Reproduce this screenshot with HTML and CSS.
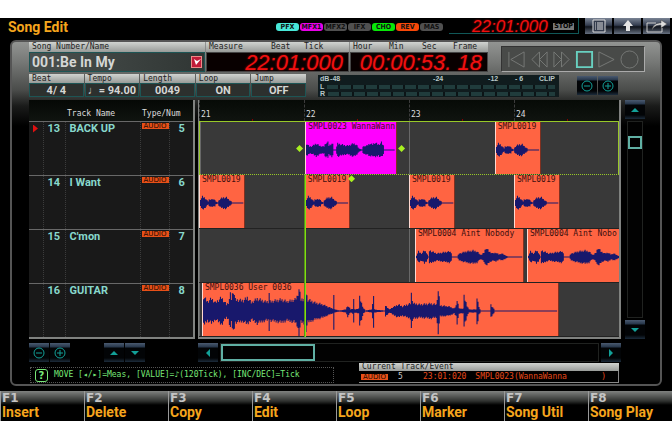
FILE: index.html
```html
<!DOCTYPE html>
<html lang="en">
<head>
    <meta charset="UTF-8">
    <meta name="viewport" content="width=device-width, initial-scale=1.0">
    <title>Song Edit</title>
    <link rel="stylesheet" href="styles.css">
</head>
<body>

    <div class="screen">
        <header class="titlebar">
            <h1>Song Edit</h1>
            <div class="effects">
                <span class="badge cyan">PFX</span>
                <span class="badge magenta">MFX1</span>
                <span class="badge">MFX2</span>
                <span class="badge">IFX</span>
                <span class="badge green">CHO</span>
                <span class="badge orange">REV</span>
                <span class="badge">MAS</span>
            </div>
            <div class="position">
                <span class="led small">22:01:000</span>
                <span class="stop-label">STOP</span>
            </div>
            <div class="top-buttons">
                <button aria-label="Menu">
                    <svg width="18" height="14" viewBox="0 0 18 14"><path d="M3 1h12v12H3z" fill="#333b4c" stroke="#ddd"/><path d="M5 4h1M7 4h6M5 6h1M7 6h6M5 8h1M7 8h6M5 10h1M7 10h6" stroke="#ddd"/></svg>
                </button>
                <button aria-label="Up">
                    <svg width="18" height="14" viewBox="0 0 18 14"><path d="M9 1l5 6h-3v5H7V7H4z" fill="#e4e4e4"/></svg>
                </button>
                <button aria-label="Exit">
                    <svg width="24" height="14" viewBox="0 0 24 14"><path d="M11 4H2v9h15V9" fill="none" stroke="#ccc"/><path d="M7 11c1-5 4-7 9-7V1l6 4-6 4V6c-4 0-7 1-9 5z" fill="#ddd" stroke="#444" stroke-width=".5"/></svg>
                </button>
            </div>
        </header>

        <main class="panel">
            <div class="row">
                <div class="field song">
                    <div class="label">Song Number/Name</div>
                    <div class="value">
                        <span>001:Be In My</span>
                        <button class="list-button" aria-label="Song list">
                            <svg width="8" height="8" viewBox="0 0 8 8"><path d="M1 1l2 6 5-6-4 2z" fill="#fff"/></svg>
                        </button>
                    </div>
                </div>
                <div class="field measure">
                    <div class="label"><span>Measure</span><span>Beat</span><span>Tick</span></div>
                    <div class="value led">22:01:000</div>
                </div>
                <div class="field hour">
                    <div class="label"><span>Hour</span><span>Min</span><span>Sec</span><span>Frame</span></div>
                    <div class="value led">00:00:53. 18</div>
                </div>
                <div class="transport">
                    <button aria-label="To start"><svg viewBox="0 0 20 20"><path d="M2 2v16M18 2v16L4 10z"/></svg></button>
                    <button aria-label="Rewind"><svg viewBox="0 0 20 20"><path d="M10 2v16L2 10zM18 2v16l-8-8z"/></svg></button>
                    <button aria-label="Forward"><svg viewBox="0 0 20 20"><path d="M2 2v16l8-8zM10 2v16l8-8z"/></svg></button>
                    <button class="active" aria-label="Stop"><svg viewBox="0 0 20 20"><path d="M2 2h16v16H2z"/></svg></button>
                    <button aria-label="Play"><svg viewBox="0 0 20 20"><path d="M2 2v16l16-8z"/></svg></button>
                    <button aria-label="Record"><svg viewBox="0 0 20 20"><circle cx="10" cy="10" r="9"/></svg></button>
                </div>
            </div>

            <div class="row second">
                <div class="field small-field">
                    <div class="label">Beat</div>
                    <div class="value">4/ 4</div>
                </div>
                <div class="field small-field">
                    <div class="label">Tempo</div>
                    <div class="value">♩= 94.00</div>
                </div>
                <div class="field small-field">
                    <div class="label">Length</div>
                    <div class="value">0049</div>
                </div>
                <div class="field small-field">
                    <div class="label">Loop</div>
                    <div class="value">ON</div>
                </div>
                <div class="field small-field">
                    <div class="label">Jump</div>
                    <div class="value">OFF</div>
                </div>
                <div class="meter">
                    <div class="scale">
                        <span>dB</span><span>-48</span><span>-24</span><span>-12</span><span>- 6</span><span>CLIP</span>
                    </div>
                    <div class="channel"><span>L</span><i></i></div>
                    <div class="channel"><span>R</span><i></i></div>
                </div>
                <div class="zoom">
                    <button class="key" aria-label="Zoom out"><svg width="12" height="12" viewBox="0 0 12 12"><circle cx="6" cy="6" r="5"/><path d="M3 6h6"/></svg></button>
                    <button class="key" aria-label="Zoom in"><svg width="12" height="12" viewBox="0 0 12 12"><circle cx="6" cy="6" r="5"/><path d="M3 6h6M6 3v6"/></svg></button>
                </div>
            </div>

            <div class="editor">
                <table class="tracks">
                    <colgroup>
                        <col class="mark"><col class="num"><col class="name"><col class="type"><col class="ch">
                    </colgroup>
                    <thead>
                        <tr><th></th><th></th><th>Track Name</th><th colspan="2">Type/Num</th></tr>
                    </thead>
                    <tbody>
                        <tr><td><span class="current"></span></td><td>13</td><td>BACK UP</td><td><span class="audio">AUDIO</span></td><td>5</td></tr>
                        <tr><td></td><td>14</td><td>I Want</td><td><span class="audio">AUDIO</span></td><td>6</td></tr>
                        <tr><td></td><td>15</td><td>C'mon</td><td><span class="audio">AUDIO</span></td><td>7</td></tr>
                        <tr><td></td><td>16</td><td>GUITAR</td><td><span class="audio">AUDIO</span></td><td>8</td></tr>
                    </tbody>
                </table>

                <div class="timeline">
                    <div class="ruler"><span>21</span><span>22</span><span>23</span><span>24</span></div>
                    <div class="lanes">
                        <div class="lane selected">
                            <div class="clip picked" style="left:25.2%;width:21.9%"><span>SMPL0023 WannaWann</span><svg data-wave="wanna"></svg></div>
                            <div class="clip" style="left:70.5%;width:11%"><span>SMPL0019</span><svg data-wave="stab"></svg></div>
                            <b class="handle" style="left:23.7%;top:50%"></b>
                            <b class="handle" style="left:48.1%;top:50%"></b>
                        </div>
                        <div class="lane">
                            <div class="clip" style="left:0%;width:11%"><span>SMPL0019</span><svg data-wave="stab"></svg></div>
                            <div class="clip" style="left:25.2%;width:10.7%"><span>SMPL0019</span><svg data-wave="stab"></svg></div>
                            <div class="clip" style="left:50%;width:11%"><span>SMPL0019</span><svg data-wave="stab"></svg></div>
                            <div class="clip" style="left:75%;width:11%"><span>SMPL0019</span><svg data-wave="stab"></svg></div>
                            <b class="handle" style="left:36.2%;top:6%"></b>
                        </div>
                        <div class="lane">
                            <div class="clip" style="left:51.4%;width:26%"><span>SMPL0004 Aint Nobody</span><svg data-wave="nobody"></svg></div>
                            <div class="clip" style="left:78.1%;width:26%"><span>SMPL0004 Aint Nobo</span><svg data-wave="nobody"></svg></div>
                        </div>
                        <div class="lane">
                            <div class="clip" style="left:0.7%;width:85%"><span>SMPL0036 User 0036</span><svg data-wave="user"></svg></div>
                        </div>
                        <div class="playhead" style="left:25.2%"></div>
                    </div>
                </div>

                <div class="vscroll">
                    <button class="key" aria-label="Scroll up"><svg width="8" height="4" viewBox="0 0 8 4"><path class="solid" d="M0 4l4-4 4 4z"/></svg></button>
                    <div class="track"><div class="thumb"></div></div>
                    <button class="key" aria-label="Scroll down"><svg width="8" height="4" viewBox="0 0 8 4"><path class="solid" d="M0 0l4 4 4-4z"/></svg></button>
                </div>

                <div class="track-keys">
                    <button class="key" aria-label="Shrink"><svg width="12" height="12" viewBox="0 0 12 12"><circle cx="6" cy="6" r="5"/><path d="M3 6h6"/></svg></button>
                    <button class="key" aria-label="Enlarge"><svg width="12" height="12" viewBox="0 0 12 12"><circle cx="6" cy="6" r="5"/><path d="M3 6h6M6 3v6"/></svg></button>
                    <button class="key apart" aria-label="Previous track"><svg width="8" height="4" viewBox="0 0 8 4"><path class="solid" d="M0 4l4-4 4 4z"/></svg></button>
                    <button class="key" aria-label="Next track"><svg width="8" height="4" viewBox="0 0 8 4"><path class="solid" d="M0 0l4 4 4-4z"/></svg></button>
                </div>

                <div class="hscroll">
                    <button class="key" aria-label="Scroll left"><svg width="4" height="8" viewBox="0 0 4 8"><path class="solid" d="M4 0L0 4l4 4z"/></svg></button>
                    <div class="track"><div class="thumb"></div></div>
                    <button class="key" aria-label="Scroll right"><svg width="4" height="8" viewBox="0 0 4 8"><path class="solid" d="M0 0l4 4-4 4z"/></svg></button>
                </div>
            </div>

            <div class="status">
                <div class="help">
                    <span class="question">?</span>
                    <span>MOVE [◂/▸]=Meas, [VALUE]=♪(120Tick), [INC/DEC]=Tick</span>
                </div>
                <div class="event">
                    <div class="label">Current Track/Event</div>
                    <div class="event-info">
                        <span class="audio">AUDIO</span>
                        <span class="white">5</span>
                        <span>23:01:020</span>
                        <span class="sample"><span>SMPL0023(WannaWanna</span><span>)</span></span>
                    </div>
                </div>
            </div>
        </main>

        <nav class="fkeys">
            <button><small>F1</small>Insert</button>
            <button><small>F2</small>Delete</button>
            <button><small>F3</small>Copy</button>
            <button><small>F4</small>Edit</button>
            <button><small>F5</small>Loop</button>
            <button><small>F6</small>Marker</button>
            <button><small>F7</small>Song Util</button>
            <button><small>F8</small>Song Play</button>
        </nav>
    </div>

    <script src="waves.js"></script>
</body>
</html>
```

FILE: styles.css
```css
* {
    box-sizing: border-box;
}
body {
    margin: 0;
    padding-top: 18px;
    background: #fff;
    font-family: "DejaVu Sans Mono", monospace;
    font-size: 8px;
    line-height: 10px;
}
button {
    margin: 0;
    padding: 0;
    border: none;
    font: inherit;
    cursor: pointer;
}
svg {
    display: block;
}
.screen {
    background: #000;
}

/* title bar */
.titlebar {
    display: flex;
    align-items: flex-start;
    height: 22px;
    padding-right: 2px;
}
h1 {
    margin: 0 auto 0 8px;
    color: #f5a51d;
    font: bold 14px/18px Roboto, sans-serif;
}
.effects {
    display: flex;
    gap: 1px;
    padding-top: 5px;
}
.badge {
    width: 23px;
    height: 8px;
    border-radius: 3px;
    background: #505050;
    color: #111;
    font: bold 7px/8px "DejaVu Sans Condensed", "DejaVu Sans", sans-serif;
    text-align: center;
}
.cyan { background: #48e8d8; }
.magenta { background: #e800e8; }
.green { background: #08e808; }
.orange { background: #f84808; }
.led {
    color: #f01010;
    font: italic 22px/20px "Liberation Sans", sans-serif;
    text-shadow: 0 0 2px #a00000;
    white-space: pre;
}
.led.small {
    font-size: 17px;
    line-height: 14px;
}
.position {
    display: flex;
    align-items: center;
    justify-content: space-between;
    width: 130px;
    height: 16px;
    margin-left: 6px;
    padding: 2px 4px 0 23px;
    border-bottom: 1px solid #105858;
    border-right: 1px solid #105858;
}
.stop-label {
    padding: 0 1px;
    background: #777;
    color: #000;
    font: bold 7px/7px "DejaVu Sans Condensed", "DejaVu Sans", sans-serif;
}
.top-buttons {
    display: flex;
    gap: 2px;
    margin-left: 6px;
}
.top-buttons button {
    display: flex;
    align-items: center;
    justify-content: center;
    width: 27px;
    height: 16px;
    background: linear-gradient(#7a8494, #343d50 45%, #10141c 55%, #667080);
}

/* panel */
.panel {
    margin: 0 10px;
    padding: 0 15px 1px 17px;
    border: 2px solid #555;
    border-radius: 6px;
    background: linear-gradient(#929492, #767876 20px, #4a4c4a 48px, #1a1b1a 64px, #000 84px);
}
.row {
    display: flex;
    gap: 1px;
}
.second {
    margin: 2px 0 3px;
}
.label {
    height: 10px;
    padding-left: 3px;
    background: linear-gradient(#d0d3d0, #989b98);
    color: #222;
    white-space: nowrap;
}
.value {
    height: 20px;
    border: 1px solid #1d5555;
    background: #2c302e;
    color: #d4d6d4;
    font: bold 11px/13px Roboto, sans-serif;
    white-space: nowrap;
}
.song {
    flex: 1;
}
.song .value {
    display: flex;
    align-items: center;
    justify-content: space-between;
    padding: 0 2px;
    background: linear-gradient(90deg, #4a504e, #303634);
    font-size: 14px;
}
.list-button {
    display: flex;
    align-items: center;
    justify-content: center;
    width: 11px;
    height: 12px;
    border: 1px solid #e88;
    background: #c01c38;
}
.measure {
    width: 143px;
}
.hour {
    width: 138px;
}
.measure .label,
.hour .label {
    display: grid;
    grid-template-columns: 36px 33px 31px 1fr;
}
.measure .label {
    grid-template-columns: 62px 33px 1fr;
}
.field .led {
    padding-right: 5px;
    border-color: #444;
    background: #080000;
    color: #f01010;
    font: italic 22px/20px "Liberation Sans", sans-serif;
    text-align: right;
}
.transport {
    display: flex;
    align-items: center;
    justify-content: space-between;
    width: 144px;
    height: 26px;
    margin: 4px 0 0 12px;
    padding: 0 5px;
    border: 1px solid #aaa;
    border-top-color: #333;
    border-left-color: #333;
    background: #484a48;
}
.transport button {
    background: none;
}
.transport svg {
    width: 19px;
    height: 19px;
    fill: none;
    stroke: #777977;
}
.transport .active svg {
    stroke: #68d0c0;
    stroke-width: 2;
}
.small-field {
    width: 55px;
}
.small-field .label {
    height: 9px;
    line-height: 9px;
}
.small-field .value {
    height: 14px;
    line-height: 13px;
    text-align: center;
}
.meter {
    flex: 1;
    height: 22px;
    margin: 1px 0 0 11px;
    padding: 0 4px 0 2px;
    background: #101c1e;
    color: #b8c8c8;
    font: bold 7px/7px "Liberation Sans", sans-serif;
}
.scale {
    display: grid;
    grid-template-columns: 10px 103px 55px 27px 24px 1fr;
    height: 8px;
    white-space: nowrap;
}
.channel {
    display: flex;
    gap: 3px;
}
.channel i {
    flex: 1;
    height: 4px;
    margin-top: 2px;
    background: repeating-linear-gradient(90deg, #203c3c 0 11px, #0c1416 11px 13px);
}
.zoom {
    display: flex;
    gap: 1px;
    margin: 2px 27px 0 17px;
}
.key {
    display: flex;
    flex: none;
    align-items: center;
    justify-content: center;
    width: 20px;
    height: 19px;
    background: linear-gradient(#4a5a70, #26364a 4px, #020406 5px, #020406 15px, #1c2c3c);
}
.key svg {
    fill: none;
    stroke: #12a098;
}
.key .solid {
    fill: #12a098;
    stroke: none;
}

/* track list and timeline */
.editor {
    display: grid;
    grid-template-columns: 165px minmax(0, 1fr) 20px;
    gap: 4px;
}
.tracks {
    width: 100%;
    height: 239px;
    border-collapse: collapse;
    table-layout: fixed;
    border-right: 2px solid #808280;
    border-bottom: 2px solid #808280;
    background: #191919;
}
.mark { width: 14px; }
.num { width: 22px; }
.name { width: 75px; }
.type { width: 29px; }
.ch { width: 25px; }
.tracks th {
    height: 21px;
    padding: 8px 0 0 2px;
    background: linear-gradient(#050805, #101410);
    color: #ddd;
    font-weight: normal;
    text-align: left;
}
.tracks td {
    height: 54px;
    padding: 0 0 0 4px;
    border-top: 1px solid #686868;
    border-right: 1px dotted #3c3c3c;
    color: #88d8cc;
    font: bold 11px/14px Roboto, sans-serif;
    vertical-align: top;
}
.tracks td:nth-child(4) {
    padding-left: 1px;
}
.tracks td:last-child {
    padding-left: 9px;
}
.current {
    display: block;
    width: 5px;
    height: 8px;
    margin-top: 3px;
    background: #e01010;
    clip-path: polygon(0 0, 100% 50%, 0 100%);
}
.audio {
    display: block;
    width: 27px;
    height: 6px;
    background: #e85018;
    color: #200800;
    font: 7px/6px "DejaVu Sans", sans-serif;
    text-align: center;
}
.tracks .audio {
    margin-top: 1px;
}
.timeline {
    border: solid #808280;
    border-width: 0 2px 2px 1px;
    background: #000;
}
.ruler {
    display: grid;
    grid-template-columns: repeat(4, 1fr);
    height: 21px;
    background: linear-gradient(#060a06, #101410);
    color: #ddd;
}
.ruler span {
    padding: 10px 0 0 1px;
    border-left: 1px dashed #3c3c3c;
    background: linear-gradient(#800, #800) 50% 100% / 1px 2px no-repeat;
}
.lanes {
    position: relative;
}
.lane {
    position: relative;
    height: 54px;
    overflow: hidden;
    border-bottom: 1px solid #222;
    background: repeating-linear-gradient(90deg, #686868 0 1px, #393939 1px 25%);
}
.selected {
    border: 1px solid #98c828;
    border-bottom-style: dotted;
}
.clip {
    position: absolute;
    top: 0;
    bottom: 0;
    overflow: hidden;
    border-left: 1px solid #ffd8d0;
    border-right: 1px solid #803020;
    background: #ff6442;
    color: #401010;
    white-space: nowrap;
}
.clip span {
    display: block;
    padding-left: 2px;
}
.clip svg {
    width: 100%;
    height: 36px;
    overflow: visible;
    fill: #18186c;
}
.picked {
    background: #ff00ff;
}
.handle {
    position: absolute;
    width: 7px;
    height: 7px;
    margin: -3px;
    background: #a8f020;
    clip-path: polygon(50% 0, 100% 50%, 50% 100%, 0 50%);
}
.playhead {
    position: absolute;
    top: 54px;
    bottom: 0;
    width: 1px;
    background: #80e010;
    box-shadow: -1px 0 #58901c;
}
.vscroll,
.hscroll {
    display: flex;
    gap: 2px;
}
.vscroll {
    flex-direction: column;
}
.track {
    flex: 1;
    border: 1px solid #202220;
    background: #020202;
}
.vscroll .track {
    margin: 0 2px;
    padding-top: 14px;
}
.thumb {
    border: 2px solid #60b0a4;
}
.vscroll .thumb {
    height: 13px;
}
.hscroll .thumb {
    width: 25%;
    height: 100%;
}
.track-keys {
    display: flex;
    gap: 1px;
}
.track-keys .apart {
    margin-left: 33px;
}

/* help line and current event */
.status {
    display: flex;
    align-items: flex-end;
    justify-content: space-between;
    margin: 1px 26px 0 1px;
}
.help {
    display: flex;
    align-items: center;
    gap: 6px;
    width: 304px;
    height: 16px;
    padding-left: 4px;
    border: 1px dotted #555;
    color: #78e878;
    white-space: nowrap;
}
.question {
    width: 13px;
    height: 13px;
    border: 1px solid #78e878;
    border-radius: 3px;
    font: bold 10px/11px "DejaVu Sans", sans-serif;
    text-align: center;
}
.event {
    width: 260px;
}
.event .label {
    height: 8px;
    line-height: 8px;
}
.event-info {
    display: flex;
    align-items: center;
    height: 12px;
    padding-left: 2px;
    border: solid #888;
    border-width: 0 1px 1px 0;
    background: #000;
    color: #e84818;
}
.event-info .white {
    width: 35px;
    padding-left: 10px;
    color: #ccc;
}
.sample {
    display: flex;
    flex: 1;
    justify-content: space-between;
    padding: 0 12px 0 9px;
}

/* function keys */
.fkeys {
    display: grid;
    grid-template-columns: repeat(8, 1fr);
    padding-top: 5px;
}
.fkeys button {
    height: 30px;
    padding-left: 1px;
    border-left: 1px solid #999;
    background: linear-gradient(#808280, #303230 10px, #000 14px);
    color: #f5a51d;
    font: bold 14px/17px Roboto, sans-serif;
    text-align: left;
}
.fkeys small {
    display: block;
    color: #c4c4c4;
    font: bold 12px/12px "DejaVu Sans", sans-serif;
}
```

FILE: waves.js
```js
// Envelope of each sample: length, then [x, amplitude] points
const waves = {
    stab: { length: 46, points: [[0, 3], [2, 6], [4, 5], [6, 3], [8, 1], [9, 3], [15, 3], [16, 1], [18, 0], [19, 2], [21, 4], [24, 5], [27, 5], [32, 1], [33, 0], [46, 0]] },
    wanna: { length: 92, points: [[0, 6], [3, 3], [5, 3], [10, 6], [13, 4], [16, 3], [18, 3], [20, 7], [22, 7], [23, 4], [26, 6], [27, 5], [28, 0], [30, 0], [32, 6], [36, 5], [40, 4], [43, 4], [48, 6], [51, 5], [54, 1], [57, 0], [58, 3], [62, 4], [65, 6], [68, 5], [70, 7], [74, 5], [77, 7], [79, 4], [80, 0], [92, 0]] },
    nobody: { length: 108, points: [[0, 1], [2, 5], [5, 3], [8, 6], [10, 4], [12, 0], [13, 6], [16, 5], [20, 3], [26, 4], [33, 5], [35, 4], [36, 0], [41, 0], [43, 3], [50, 5], [57, 6], [61, 5], [64, 2], [66, 2], [68, 4], [70, 9], [73, 5], [77, 3], [80, 4], [83, 2], [86, 3], [92, 0], [108, 0]] },
    user: { length: 357, points: [[0, 14], [4, 9], [8, 12], [12, 8], [18, 13], [23, 6], [25, 8], [27, 16], [28, 12], [30, 21], [32, 11], [40, 10], [44, 13], [48, 8], [54, 12], [62, 9], [65, 9], [66, 18], [67, 9], [78, 11], [84, 9], [92, 11], [94, 14], [96, 22], [98, 11], [101, 12], [103, 18], [105, 11], [112, 8], [120, 6], [127, 3], [130, 2], [131, 16], [132, 1], [137, 0], [143, 1], [145, 5], [148, 1], [150, 2], [151, 12], [152, 1], [156, 2], [157, 13], [161, 2], [163, 0], [169, 1], [171, 15], [172, 1], [182, 0], [183, 5], [187, 1], [190, 3], [196, 6], [200, 4], [205, 6], [208, 7], [209, 17], [211, 7], [218, 6], [228, 7], [234, 6], [236, 20], [238, 5], [247, 4], [252, 2], [254, 5], [255, 12], [257, 2], [261, 2], [262, 14], [265, 5], [267, 1], [274, 1], [275, 15], [277, 3], [279, 0], [288, 0], [289, 6], [293, 0], [357, 0]] }
};

function amplitudeAt(points, x) {
    const next = points.findIndex(p => p[0] >= x);
    if (next < 1) return points[0][1];
    const [x0, a0] = points[next - 1];
    const [x1, a1] = points[next];
    return a0 + (a1 - a0) * (x - x0) / (x1 - x0);
}

document.querySelectorAll('svg[data-wave]').forEach(svg => {
    const { length, points } = waves[svg.dataset.wave];
    let d = '';
    for (let x = 0; x < length - 1; x++) {
        const amp = amplitudeAt(points, x);
        // uneven edge so loud parts look jagged
        const up = 0.5 + amp * (0.8 + (x * 7 % 5) / 12);
        const down = 0.5 + amp * (0.8 + (x * 11 % 7) / 18);
        d += `M${x} ${18 - up}h1.1V${18 + down}h-1.1z`;
    }
    svg.setAttribute('viewBox', `0 0 ${length} 36`);
    svg.setAttribute('preserveAspectRatio', 'none');
    svg.innerHTML = `<path d="${d}"/>`;
});
```
